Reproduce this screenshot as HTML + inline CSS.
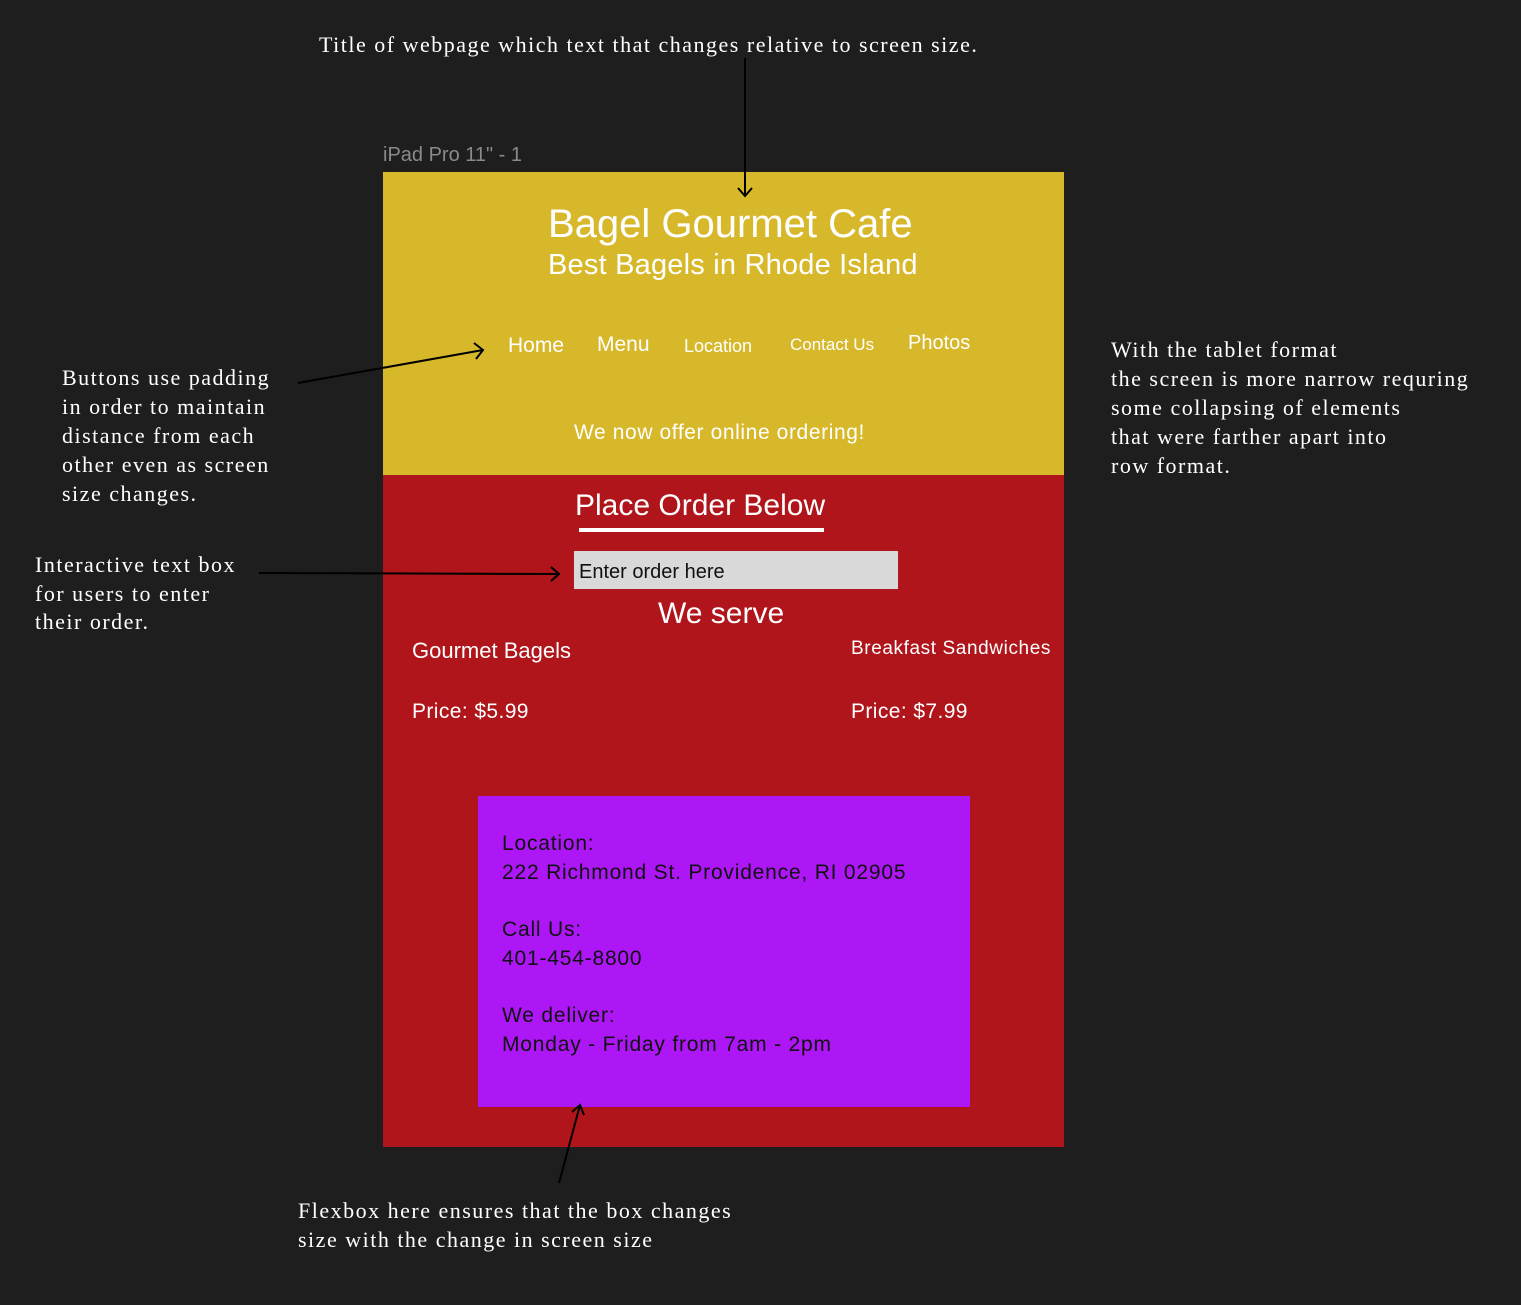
<!DOCTYPE html>
<html><head><style>
body{margin:0;width:1521px;height:1305px;background:#1e1e1e;position:relative;overflow:hidden;font-family:"Liberation Sans",sans-serif}
.a{position:absolute;white-space:nowrap;line-height:1}
.s{font-family:"Liberation Serif",serif;color:#fff;font-size:22px;line-height:29px;letter-spacing:1.5px}
.w{color:#fff}
</style></head><body>
<div class="a s" style="left:319px;top:30px">Title of webpage which text that changes relative to screen size.</div>
<div class="a" style="left:383px;top:145px;color:#8a8a8a;font-size:20px">iPad Pro 11" - 1</div>
<div style="position:absolute;left:383px;top:172px;width:681px;height:303px;background:#d8b82b"></div>
<div style="position:absolute;left:383px;top:475px;width:681px;height:672px;background:#af151a"></div>
<div style="position:absolute;left:478px;top:796px;width:492px;height:311px;background:#ad16f5"></div>
<div class="a w" style="left:548px;top:204px;font-size:40px">Bagel Gourmet Cafe</div>
<div class="a w" style="left:548px;top:251px;font-size:29px;letter-spacing:0.2px">Best Bagels in Rhode Island</div>
<div class="a w" style="left:508px;top:335px;font-size:21px">Home</div>
<div class="a w" style="left:597px;top:334px;font-size:21px">Menu</div>
<div class="a w" style="left:684px;top:337px;font-size:18px">Location</div>
<div class="a w" style="left:790px;top:336px;font-size:17px">Contact Us</div>
<div class="a w" style="left:908px;top:333px;font-size:20px">Photos</div>
<div class="a w" style="left:574px;top:422px;font-size:21px;letter-spacing:0.6px">We now offer online ordering!</div>
<div class="a w" style="left:575px;top:491px;font-size:30px">Place Order Below</div>
<div style="position:absolute;left:579px;top:528px;width:245px;height:4px;background:#fff"></div>
<div style="position:absolute;left:574px;top:551px;width:324px;height:38px;background:#d9d9d9"></div>
<div class="a" style="left:579px;top:562px;font-size:20px;color:#111">Enter order here</div>
<div class="a w" style="left:658px;top:599px;font-size:30px">We serve</div>
<div class="a w" style="left:412px;top:640px;font-size:22px">Gourmet Bagels</div>
<div class="a w" style="left:851px;top:639px;font-size:19px;letter-spacing:0.6px">Breakfast Sandwiches</div>
<div class="a w" style="left:412px;top:701px;font-size:21px;letter-spacing:0.4px">Price: $5.99</div>
<div class="a w" style="left:851px;top:701px;font-size:21px;letter-spacing:0.4px">Price: $7.99</div>
<div class="a" style="left:502px;top:830px;font-size:21px;line-height:28.7px;color:#111;letter-spacing:0.8px">Location:<br>222 Richmond St. Providence, RI 02905<br><br>Call Us:<br>401-454-8800<br><br>We deliver:<br>Monday - Friday from 7am - 2pm</div>
<div class="a s" style="left:62px;top:363px">Buttons use padding<br>in order to maintain<br>distance from each<br>other even as screen<br>size changes.</div>
<div class="a s" style="left:35px;top:551px;line-height:28.5px">Interactive text box<br>for users to enter<br>their order.</div>
<div class="a s" style="left:1111px;top:335px">With the tablet format<br>the screen is more narrow requring<br>some collapsing of elements<br>that were farther apart into<br>row format.</div>
<div class="a s" style="left:298px;top:1196px;line-height:29px">Flexbox here ensures that the box changes<br>size with the change in screen size</div>
<svg style="position:absolute;left:0;top:0" width="1521" height="1305" fill="none" stroke="#000" stroke-width="2">
<path d="M745 58V196M738 188l7 8 7-8"/>
<path d="M298 383L483 350M474 343l9 7-7 9"/>
<path d="M259 573L559 574M551 567l8 7-8 7"/>
<path d="M559 1183L580 1105M572 1112l8-7 4 10"/>
</svg>
</body></html>
